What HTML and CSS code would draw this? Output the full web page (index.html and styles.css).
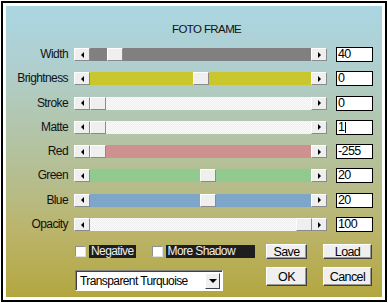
FILE: index.html
```html
<!DOCTYPE html>
<html>
<head>
<meta charset="utf-8">
<link rel="stylesheet" href="styles.css">
</head>
<body>
<div class="frame">
  <div class="panel">
    <div class="title">FOTO FRAME</div>
    <div class="rows">
      <div class="row"><span class="lbl">Width</span>
        <div class="sb"><span class="arr l"><i></i></span><div class="track t-gray"><span class="thumb" style="left:17px"></span></div><span class="arr r"><i></i></span></div>
        <span class="val">40</span></div>
      <div class="row"><span class="lbl">Brightness</span>
        <div class="sb"><span class="arr l"><i></i></span><div class="track t-yellow"><span class="thumb" style="left:103px"></span></div><span class="arr r"><i></i></span></div>
        <span class="val">0</span></div>
      <div class="row"><span class="lbl">Stroke</span>
        <div class="sb"><span class="arr l"><i></i></span><div class="track t-white"><span class="thumb" style="left:0px"></span></div><span class="arr r"><i></i></span></div>
        <span class="val">0</span></div>
      <div class="row"><span class="lbl">Matte</span>
        <div class="sb"><span class="arr l"><i></i></span><div class="track t-white"><span class="thumb" style="left:0px"></span></div><span class="arr r"><i></i></span></div>
        <span class="val">1<b class="caret"></b></span></div>
      <div class="row"><span class="lbl">Red</span>
        <div class="sb"><span class="arr l"><i></i></span><div class="track t-red"><span class="thumb" style="left:0px"></span></div><span class="arr r"><i></i></span></div>
        <span class="val">-255</span></div>
      <div class="row"><span class="lbl">Green</span>
        <div class="sb"><span class="arr l"><i></i></span><div class="track t-green"><span class="thumb" style="left:110px"></span></div><span class="arr r"><i></i></span></div>
        <span class="val">20</span></div>
      <div class="row"><span class="lbl">Blue</span>
        <div class="sb"><span class="arr l"><i></i></span><div class="track t-blue"><span class="thumb" style="left:110px"></span></div><span class="arr r"><i></i></span></div>
        <span class="val">20</span></div>
      <div class="row"><span class="lbl">Opacity</span>
        <div class="sb"><span class="arr l"><i></i></span><div class="track t-white"><span class="thumb" style="left:206px"></span></div><span class="arr r"><i></i></span></div>
        <span class="val">100</span></div>
    </div>
    <div class="brow brow1">
      <div class="left checks">
        <span class="cb"></span><span class="cbl">Negative</span>
        <span class="cb cb2"></span><span class="cbl">More Shadow</span>
      </div>
      <span class="btn b1 small">Save</span>
      <span class="btn b2 small">Load</span>
    </div>
    <div class="brow brow2">
      <div class="left">
        <div class="combo"><span class="ctext">Transparent Turquoise</span><span class="cbtn"><i></i></span></div>
      </div>
      <span class="btn b1 big">OK</span>
      <span class="btn b2 big">Cancel</span>
    </div>
  </div>
</div>
</body>
</html>
```
FILE: styles.css
```css
* { box-sizing: border-box; }
body {
  margin: 0;
  background: #fff;
  font-family: "Liberation Sans", Arial, sans-serif;
  font-size: 12px;
  letter-spacing: -0.6px;
  color: #111;
}
.frame {
  margin: 1px;
  width: 386px;
  height: 301px;
  border: 2px solid #000;
  padding: 3px;
  background: #fff;
}
.panel {
  width: 376px;
  height: 291px;
  background: linear-gradient(180deg, #aad6e2 0%, #afcfcf 20%, #b3c4a6 45%, #b6bc8a 62%, #bbb46a 78%, #b3a640 100%);
  padding-top: 17px;
}
.title {
  height: 13px;
  line-height: 13px;
  padding-left: 166px;
  font-size: 11.5px;
  letter-spacing: -0.6px;
}
.rows {
  margin-top: 11px;
  display: flex;
  flex-direction: column;
  gap: 9.3px;
}
.row {
  display: flex;
  align-items: center;
  height: 15px;
}
.lbl {
  width: 62px;
  text-align: right;
  margin-right: 6px;
  line-height: 13px;
}
.sb {
  display: flex;
  width: 253px;
  height: 13px;
}
.arr {
  width: 16px;
  height: 13px;
  background: #efefef;
  border-top: 1px solid #fff;
  border-left: 1px solid #fff;
  border-right: 1px solid #8a8a8a;
  border-bottom: 1px solid #8a8a8a;
  display: flex;
  align-items: center;
  justify-content: center;
}
.arr i {
  width: 0; height: 0;
  border-top: 3px solid transparent;
  border-bottom: 3px solid transparent;
}
.arr.l i { border-right: 3px solid #000; }
.arr.r i { border-left: 3px solid #000; }
.track {
  flex: 1;
  position: relative;
}
.t-gray { background: #808080; }
.t-yellow { background: #c9c62e; }
.t-white { background: repeating-conic-gradient(#fdfdfd 0 25%, #ececec 0 50%) 0 0 / 2px 2px; }
.t-red { background: #cf9090; }
.t-green { background: #92c98e; }
.t-blue { background: #7ea6c8; }
.thumb {
  position: absolute;
  top: 0;
  width: 16px;
  height: 13px;
  background: #efefef;
  border-top: 1px solid #fff;
  border-left: 1px solid #fff;
  border-right: 1px solid #8a8a8a;
  border-bottom: 1px solid #8a8a8a;
}
.val {
  margin-left: 9px;
  width: 37px;
  height: 15px;
  background: #fff;
  border: 1px solid #000;
  padding-left: 1px;
  line-height: 13px;
  font-size: 12.5px;
  letter-spacing: -0.6px;
  color: #000;
  display: flex;
  align-items: center;
}
.caret {
  display: inline-block;
  width: 1px;
  height: 11px;
  background: #000;
  margin-left: 1px;
}
.brow {
  display: flex;
  align-items: flex-start;
  padding-left: 69px;
}
.brow1 { margin-top: 12px; height: 15px; }
.brow2 { margin-top: 8px; }
.left {
  width: 191px;
  display: flex;
  align-items: center;
}
.checks { height: 15px; }
.cb {
  width: 11px;
  height: 11px;
  background: #fff;
  border-top: 1px solid #909090;
  border-left: 1px solid #909090;
  border-right: 1px solid #e0e0e0;
  border-bottom: 1px solid #e0e0e0;
  margin-right: 3px;
}
.cb2 { margin-left: 16px; }
.cbl {
  background: #1e1e1e;
  color: #eee;
  height: 13px;
  line-height: 13px;
  padding: 0 2px;
}
.cbl:last-child { width: 89px; }
.btn {
  display: flex;
  align-items: center;
  justify-content: center;
  background: #efefef;
  border-top: 1px solid #fff;
  border-left: 1px solid #fff;
  border-right: 1px solid #404040;
  border-bottom: 1px solid #404040;
  box-shadow: inset -1px -1px 0 #999;
  color: #000;
  font-size: 12.5px;
}
.b1 { width: 41px; }
.b2 { width: 49px; margin-left: 16px; }
.small { height: 15px; }
.big { height: 19px; }
.combo {
  margin-top: 3px;
  width: 148px;
  height: 21px;
  background: #fff;
  border-top: 1px solid #808080;
  border-left: 1px solid #808080;
  border-right: 1px solid #fff;
  border-bottom: 1px solid #fff;
  box-shadow: inset 1px 1px 0 #404040;
  display: flex;
  align-items: center;
  padding: 2px;
}
.ctext {
  flex: 1;
  padding-left: 2px;
  color: #000;
}
.cbtn {
  width: 15px;
  height: 16px;
  background: #efefef;
  border-top: 1px solid #fff;
  border-left: 1px solid #fff;
  border-right: 1px solid #404040;
  border-bottom: 1px solid #404040;
  display: flex;
  align-items: center;
  justify-content: center;
}
.cbtn i {
  width: 0; height: 0;
  border-left: 4px solid transparent;
  border-right: 4px solid transparent;
  border-top: 4px solid #000;
}
```
